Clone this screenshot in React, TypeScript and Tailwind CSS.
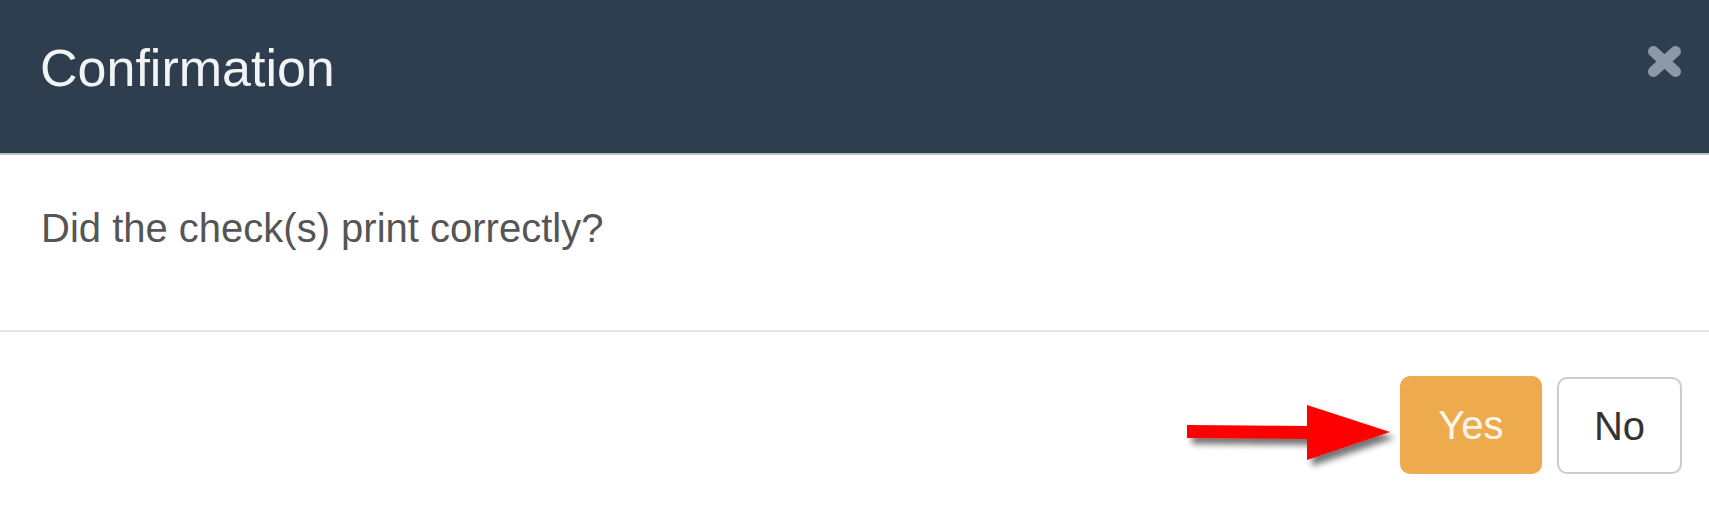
import React from "react";

export default function App() {
  return (
    <div
      className="w-[1709px] h-[506px] bg-white overflow-hidden flex flex-col"
      style={{ fontFamily: '"Liberation Sans", Arial, sans-serif' }}
    >
      {/* Header */}
      <div className="h-[153px] shrink-0 bg-[#2e3e4f] flex justify-between items-start pl-[40px] pr-[27px]">
        <h4 className="pt-[40px] text-[52px] leading-[56px] text-[#f2f3f5] font-normal">
          Confirmation
        </h4>
        <button className="mt-[45px] w-[35px] h-[33px]" aria-label="Close">
          <svg width="35" height="33" viewBox="0 0 35 33">
            <g stroke="#8b98a5" strokeWidth="11" strokeLinecap="round">
              <line x1="6.5" y1="6.5" x2="28.5" y2="26.5" />
              <line x1="28.5" y1="6.5" x2="6.5" y2="26.5" />
            </g>
          </svg>
        </button>
      </div>
      <div className="h-[2px] shrink-0 bg-[#b9c0c6]" />

      {/* Body */}
      <div className="h-[175px] shrink-0 pl-[41px] pt-[53px]">
        <p className="text-[40px] leading-[40px] text-[#555555]">
          Did the check(s) print correctly?
        </p>
      </div>
      <div className="h-[2px] shrink-0 bg-[#e6e6e6]" />

      {/* Footer */}
      <div className="flex-1 flex justify-end items-start pt-[44px] pr-[27px]">
        <svg
          width="212"
          height="78"
          viewBox="0 0 212 78"
          className="mt-[22px] mr-[3px]"
        >
          <defs>
            <filter id="sh" x="-20%" y="-30%" width="140%" height="170%">
              <feGaussianBlur in="SourceAlpha" stdDeviation="3" />
              <feOffset dx="5" dy="6" result="b" />
              <feComponentTransfer>
                <feFuncA type="linear" slope="0.55" />
              </feComponentTransfer>
              <feMerge>
                <feMergeNode />
                <feMergeNode in="SourceGraphic" />
              </feMerge>
            </filter>
          </defs>
          <path
            d="M2 27 L122 28 L122 7 L205 34 L122 62 L122 41 L2 40 Z"
            fill="#ff0000"
            filter="url(#sh)"
          />
        </svg>
        <button className="w-[142px] h-[98px] rounded-[10px] bg-[#eeab4e] text-[#fdf6ec] text-[40px] leading-none flex items-center justify-center">
          Yes
        </button>
        <button className="ml-[15px] w-[125px] h-[97px] mt-[1px] rounded-[10px] border-2 border-[#cccccc] bg-white text-[#333333] text-[40px] leading-none flex items-center justify-center">
          No
        </button>
      </div>
    </div>
  );
}
